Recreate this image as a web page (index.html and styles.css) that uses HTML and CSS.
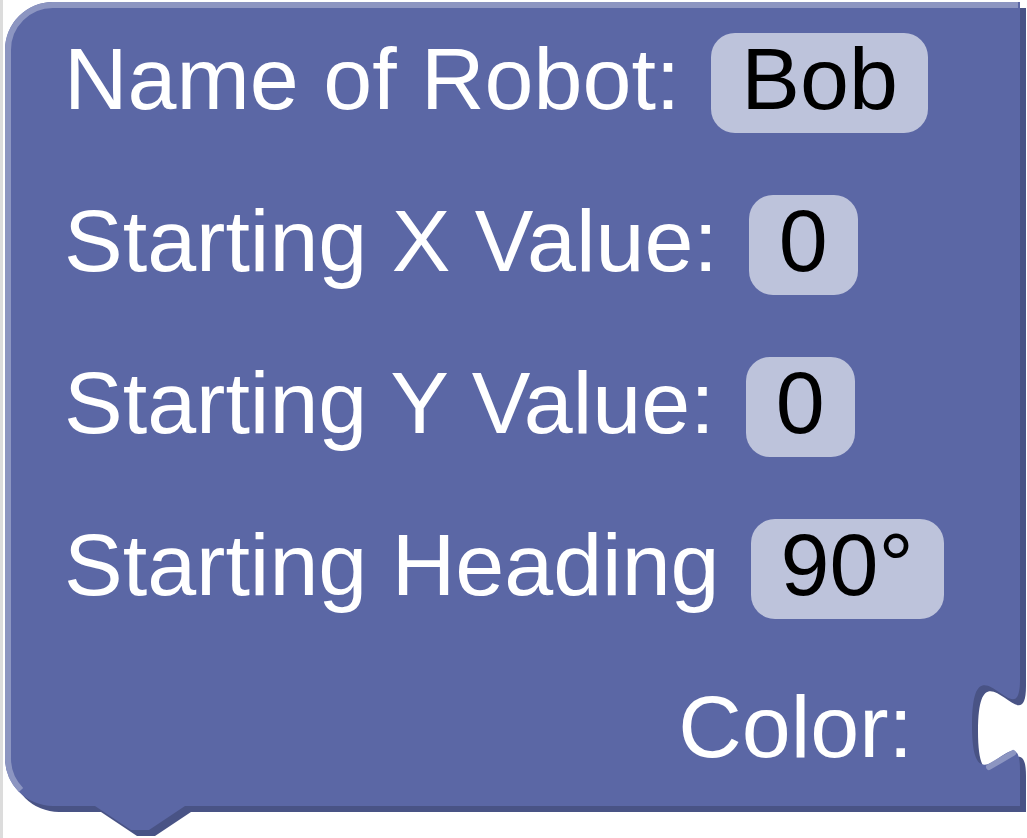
FILE: index.html
```html
<!DOCTYPE html>
<html lang="en">
<head>
<meta charset="utf-8">
<title>Robot block</title>
<link rel="stylesheet" href="styles.css">
</head>
<body>
<div class="stage">
  <div class="edge"></div>
  <div class="block">
    <svg class="block-shape" width="1021" height="834" viewBox="0 0 1021 834" aria-hidden="true">
      <path class="shape-dark" transform="translate(6,6)" d="M 0,48 A 48,48 0 0 1 48,0 H 1015 V 678 c 0,60 -48,-48 -48,45 s 48,-15 48,45 V 804 H 180 L 144,828 H 126 L 90,804 H 48 A 48,48 0 0 1 0,756 Z"/>
      <path class="shape-main" d="M 0,48 A 48,48 0 0 1 48,0 H 1015 V 678 c 0,60 -48,-48 -48,45 s 48,-15 48,45 V 804 H 180 L 144,828 H 126 L 90,804 H 48 A 48,48 0 0 1 0,756 Z"/>
      <path class="shape-light" d="M 3,756 V 48 A 45,45 0 0 1 48,3 H 1013"/>
      <path class="shape-light" d="M 3,756 A 45,45 0 0 0 16,788"/>
      <path class="shape-light round" d="M 984,765 L 1008,751"/>
    </svg>
    <div class="block-content">
      <div class="row"><span class="label">Name of Robot:</span><span class="field">Bob</span></div>
      <div class="row"><span class="label">Starting X Value:</span><span class="field">0</span></div>
      <div class="row"><span class="label">Starting Y Value:</span><span class="field">0</span></div>
      <div class="row"><span class="label">Starting Heading</span><span class="field">90°</span></div>
      <div class="row row-end"><span class="label">Color:</span></div>
    </div>
  </div>
</div>
</body>
</html>
```

FILE: styles.css
```css
html, body {
  margin: 0;
  padding: 0;
  background: #ffffff;
  overflow: hidden;
}

body {
  font-family: "Liberation Sans", Arial, sans-serif;
}

.stage {
  display: flex;
  align-items: flex-start;
  height: 838px;
}

.edge {
  flex: none;
  width: 3px;
  height: 838px;
  background: #dcdcdc;
}

.block {
  position: relative;
  flex: none;
  width: 1015px;
  height: 804px;
  margin: 2px 0 0 2px;
}

.block-shape {
  position: absolute;
  left: 0;
  top: 0;
  overflow: visible;
}

.shape-dark {
  fill: #495385;
}

.shape-main {
  fill: #5b67a5;
}

.shape-light {
  fill: none;
  stroke: #8c95c1;
  stroke-width: 6;
}

.shape-light.round {
  stroke-linecap: round;
}

.block-content {
  position: relative;
  display: flex;
  flex-direction: column;
  gap: 62px;
  padding: 31px 0 0 59px;
}

.row {
  display: flex;
  align-items: flex-start;
  gap: 31px;
  height: 100px;
}

.row-end {
  justify-content: flex-end;
  padding-right: 107px;
}

.label,
.field {
  box-sizing: border-box;
  height: 100px;
  font-size: 88px;
  line-height: 92px;
  padding-bottom: 8px;
  white-space: pre;
}

.label {
  color: #ffffff;
}

.field {
  color: #000000;
  background: #bdc3db;
  border-radius: 24px;
  padding-left: 30px;
  padding-right: 30px;
}
```
